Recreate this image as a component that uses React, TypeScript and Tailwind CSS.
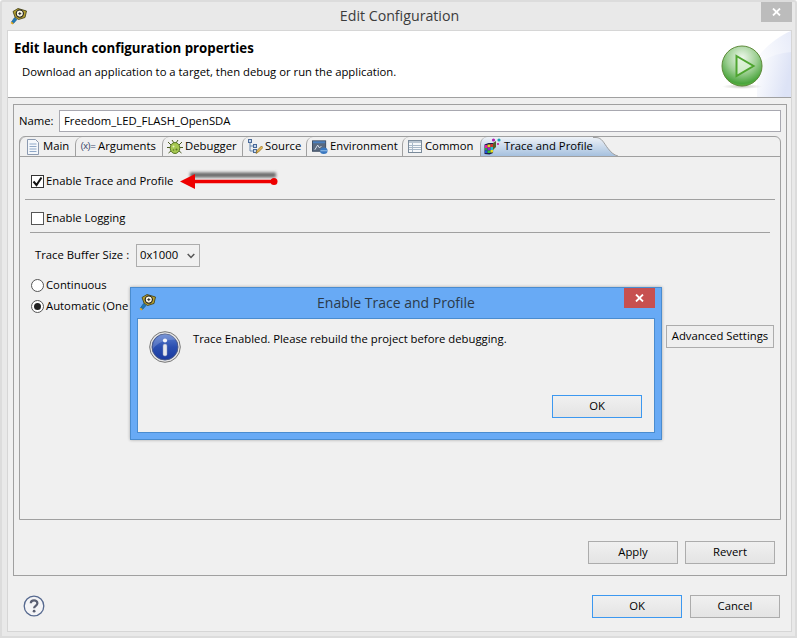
// App.tsx
import React from 'react';

const FlagIcon: React.FC = () => (
  <svg width="17" height="17" viewBox="0 0 17 17">
    <path d="M4.500 9.500L1.500 14l2 1.500 3.500-4z" fill="#1f78b4" stroke="#134a70" strokeWidth="0.5" />
    <path d="M.500 15l2 1.500 1.200-1.200-2-1.500z" fill="#e0a820" />
    <path d="M3 3.500L8 .500l8.500 2.500-1.500 6.500-6.500 2L5 9z" fill="#b5a030" stroke="#3c3a10" strokeWidth="0.8" />
    <circle cx="9.800" cy="5.600" r="3.600" fill="#fbf8e6" stroke="#1c1c1c" strokeWidth="1.100" />
    <path d="M8.300 5.600h3M9.800 4.100v3" stroke="#333" strokeWidth="1" />
  </svg>
);

const DocIcon: React.FC = () => (
  <svg width="14" height="16" viewBox="0 0 14 16">
    <path d="M1.500.500h8l3 3v12h-11z" fill="#f4f7fb" stroke="#8c9ab0" />
    <path d="M3.500 5h7M3.500 7.500h7M3.500 10h7M3.500 12.500h7" stroke="#8fa8c8" />
  </svg>
);

const BugIcon: React.FC = () => (
  <svg width="16" height="16" viewBox="0 0 16 16">
    <path d="M1 3l3 3M15 3l-3 3M0 8.500h3M16 8.500h-3M1.500 14l3-2.500M14.500 14l-3-2.500M5 1l2 3M11 1L9 4" stroke="#4a5a20" strokeWidth="1" />
    <ellipse cx="8" cy="9" rx="4.800" ry="5.500" fill="#a6c850" stroke="#5c7a28" />
    <circle cx="6.500" cy="7.500" r="1" fill="#e8f4c0" />
    <circle cx="9.500" cy="10.500" r="1" fill="#5c7a28" />
    <circle cx="6.500" cy="11" r="0.800" fill="#5c7a28" />
  </svg>
);

const SourceIcon: React.FC = () => (
  <svg width="16" height="16" viewBox="0 0 16 16">
    <path d="M3 2v10h4M3 7h4" stroke="#6a8ab0" fill="none" />
    <rect x="1.500" y="0.500" width="3" height="3" fill="#c8d8ec" stroke="#4a6a98" />
    <rect x="6.500" y="5.500" width="3" height="3" fill="#c8d8ec" stroke="#4a6a98" />
    <rect x="6.500" y="10.500" width="3" height="3" fill="#c8d8ec" stroke="#4a6a98" />
    <path d="M9 14.500l1-3 4.500-4.500 1.500 1.500-4.500 4.500z" fill="#e8b850" stroke="#8a6a20" strokeWidth="0.7" />
  </svg>
);

const EnvIcon: React.FC = () => (
  <svg width="17" height="16" viewBox="0 0 17 16">
    <rect x="0.500" y="1.500" width="14" height="11" fill="#5a6a80" stroke="#3a4a60" />
    <rect x="1" y="2" width="13" height="2" fill="#4a80c0" />
    <path d="M3 11l3-5 2 3 2-2" stroke="#dfe8f2" fill="none" />
    <ellipse cx="12.500" cy="12" rx="4" ry="3.500" fill="#3a78c0" />
    <path d="M9 12h7" stroke="#9cc4ec" />
  </svg>
);

const TableIcon: React.FC = () => (
  <svg width="14" height="13" viewBox="0 0 14 13">
    <rect x="0.500" y="0.500" width="13" height="12" fill="#f6f8fa" stroke="#7a8a9a" />
    <rect x="1" y="1" width="12" height="2" fill="#b8c4d0" />
    <path d="M1 5.500h12M1 7.500h12M1 9.500h12M4.500 3v9" stroke="#a8b8c8" />
  </svg>
);

const TraceIcon: React.FC = () => (
  <svg width="17" height="17" viewBox="0 0 17 17">
    <path d="M.500 6.500l4-1.500h5l-.500 10-3.500 1.500-5-.500z" fill="#1c1c50" />
    <rect x="1" y="7" width="2.500" height="3" fill="#e020a0" />
    <rect x="3.500" y="6.500" width="3" height="3" fill="#f0d020" />
    <rect x="6.500" y="6" width="2.500" height="3" fill="#d03030" />
    <rect x="1" y="10" width="2.500" height="2.500" fill="#20b040" />
    <rect x="3.500" y="9.500" width="3" height="3" fill="#a020d0" />
    <rect x="6.500" y="9" width="2.500" height="3" fill="#20c0d0" />
    <rect x="1" y="12.500" width="2.500" height="2.500" fill="#2050e0" />
    <rect x="3.500" y="12.500" width="3" height="2.500" fill="#30c030" />
    <rect x="6.500" y="12" width="2.500" height="2.500" fill="#e8e020" />
    <path d="M9 5l3-2v6l-3 3z" fill="#54602a" />
    <circle cx="9.500" cy="2" r="1.600" fill="#b020b0" />
    <circle cx="15" cy="2" r="1.600" fill="#20a0b0" />
    <circle cx="14" cy="6" r="1.100" fill="#c02090" />
  </svg>
);

const PlayBall: React.FC = () => (
  <svg width="44" height="48" viewBox="0 0 44 48">
    <defs>
      <radialGradient id="ballFill" cx="0.5" cy="0.3" r="0.75">
        <stop offset="0" stopColor="#f0f8ee" />
        <stop offset="0.5" stopColor="#9dcf93" />
        <stop offset="0.85" stopColor="#4aa53c" />
        <stop offset="1" stopColor="#6cc44c" />
      </radialGradient>
      <radialGradient id="ballShadow">
        <stop offset="0" stopColor="#b0b0a8" stopOpacity="0.7" />
        <stop offset="1" stopColor="#b0b0a8" stopOpacity="0" />
      </radialGradient>
    </defs>
    <ellipse cx="22" cy="41.500" rx="20" ry="2.500" fill="url(#ballShadow)" />
    <circle cx="22" cy="21" r="20" fill="url(#ballFill)" stroke="#5e8a3a" strokeWidth="1" />
    <path d="M16.500 11L33.500 21 16.500 31z" fill="#dff3d8" fillOpacity="0.75" stroke="#4fa530" strokeWidth="2" />
  </svg>
);

const InfoIcon: React.FC = () => (
  <svg width="32" height="32" viewBox="0 0 32 32">
    <defs>
      <linearGradient id="infoFill" x1="0" y1="0" x2="0" y2="1">
        <stop offset="0" stopColor="#5a7ed0" />
        <stop offset="0.5" stopColor="#2a4fb0" />
        <stop offset="1" stopColor="#1a3aa0" />
      </linearGradient>
    </defs>
    <circle cx="16" cy="16" r="15.300" fill="#e6e6e6" stroke="#777" />
    <circle cx="16" cy="16" r="13" fill="url(#infoFill)" stroke="#4a5a88" />
    <path d="M4 18c5-7 14-10 24-9-2-4-7-6-12-6C9 3 3 10 4 18z" fill="#fff" fillOpacity="0.18" />
    <circle cx="16" cy="9.500" r="2.100" fill="#f2f4fa" />
    <rect x="14" y="13" width="4" height="12" rx="1.800" fill="#e6e8ee" stroke="#8a96b8" strokeWidth="0.5" />
  </svg>
);

const HelpIcon: React.FC = () => (
  <svg width="22" height="22" viewBox="0 0 22 22">
    <circle cx="11" cy="11" r="9.800" fill="#f4f4f6" stroke="#56698f" strokeWidth="1.300" />
    <path d="M7.800 8.300c0-4 6.600-4 6.600 0 0 2.600-3.300 2.600-3.300 5" fill="none" stroke="#5a5f72" strokeWidth="2.200" />
    <circle cx="11.100" cy="16.200" r="1.400" fill="#5a5f72" />
  </svg>
);

const CloseGlyph: React.FC = () => (
  <svg width="9" height="8" viewBox="0 0 9 8">
    <path d="M1 .500l7 7M8 .500l-7 7" stroke="#fff" strokeWidth="1.800" />
  </svg>
);

const Btn: React.FC<{ label: string; focus?: boolean }> = ({ label, focus }) => (
  <button
    className={
      focus
        ? 'w-[90px] h-[23px] border border-[#3c98f0] bg-gradient-to-b from-[#f0f0f0] to-[#e4e4e4] text-black'
        : 'w-[90px] h-[23px] border border-[#acacac] bg-gradient-to-b from-[#f0f0f0] to-[#e4e4e4] text-black'
    }
  >
    {label}
  </button>
);

const Tab: React.FC<{ icon: React.ReactNode; label: string; cls: string }> = ({ icon, label, cls }) => (
  <div className={`${cls} flex items-center border-l border-[#a0a0a0] rounded-tl-[7px] whitespace-nowrap`}>
    <span className="w-[16px] mr-[2px] flex justify-center shrink-0">{icon}</span>
    <span>{label}</span>
  </div>
);

export default function App() {
  return (
    <div className="relative w-[800px] h-[640px] bg-white overflow-hidden font-['Open_Sans',sans-serif] text-[11.3px] text-black">
      {/* window frame */}
      <div className="w-[797px] h-[638px] flex flex-col bg-[#e9e9e9] border-2 border-[#dcdcdc] rounded-t-[3px] pr-[3px] pb-[4px] pl-[5px]">
        <div className="h-[28px] shrink-0 flex items-start">
          <div className="mt-[6px] ml-[3px]">
            <FlagIcon />
          </div>
          <div className="flex-1 text-center text-[14.2px] leading-[28px] text-[#3c3c3c] pl-[11px]">Edit Configuration</div>
          <div className="w-[31px] h-[20px] bg-[#bcbcbc] flex items-center justify-center">
            <CloseGlyph />
          </div>
        </div>

        <div className="flex-1 flex flex-col bg-[#f0f0f0] border border-[#d6d6d6]">
          {/* banner */}
          <div className="relative h-[67px] shrink-0 bg-white border-b border-[#a0a0a0] pl-[6px]">
            <svg className="absolute right-0 top-0" width="36" height="66" viewBox="0 0 36 66">
              <defs>
                <linearGradient id="deco" x1="0" y1="0" x2="1" y2="0.3">
                  <stop offset="0" stopColor="#ffffff" />
                  <stop offset="1" stopColor="#dde3f6" />
                </linearGradient>
                <linearGradient id="decoTop" x1="0" y1="0.6" x2="1" y2="0">
                  <stop offset="0" stopColor="#ffffff" />
                  <stop offset="1" stopColor="#e8ecf9" />
                </linearGradient>
              </defs>
              <path d="M0 30C10 15 24 5 36 0v66H0z" fill="url(#decoTop)" />
              <path d="M2 33c10-7 22-11 34-12v45H2z" fill="url(#deco)" />
            </svg>
            <div className="text-[13.25px] font-bold leading-[20px] mt-[7px]">Edit launch configuration properties</div>
            <div className="leading-[16px] mt-[6px] ml-[8px]">Download an application to a target, then debug or run the application.</div>
            <div className="absolute right-[27px] top-[14px]">
              <PlayBall />
            </div>
          </div>

          {/* main section */}
          <div className="mt-[6px] ml-[5px] mr-[4px] h-[472px] shrink-0 flex flex-col border border-[#a0a0a0] px-[5px] pt-[5px]">
            <div className="flex items-center h-[22px] shrink-0">
              <span className="w-[40px]">Name:</span>
              <input
                readOnly
                value="Freedom_LED_FLASH_OpenSDA"
                className="flex-1 h-[22px] bg-white border border-[#a8a8b0] px-[4px] pb-[2px] outline-none"
              />
            </div>

            <div className="mt-[4px] h-[384px] shrink-0 flex flex-col border border-[#a0a0a0] rounded-t-[6px]">
              <div className="flex h-[20px] shrink-0 -ml-px border-b border-[#a0a0a0]">
                <Tab cls="w-[56px] pl-[5px]" icon={<DocIcon />} label="Main" />
                <Tab
                  cls="w-[87px] pl-[4px]"
                  icon={<span className="text-[#3c4a6a] text-[9.5px] tracking-[-0.4px] font-['Liberation_Sans',sans-serif]">(x)=</span>}
                  label="Arguments"
                />
                <Tab cls="w-[80px] pl-[4px]" icon={<BugIcon />} label="Debugger" />
                <Tab cls="w-[64px] pl-[4px]" icon={<SourceIcon />} label="Source" />
                <Tab cls="w-[96px] pl-[5px]" icon={<EnvIcon />} label="Environment" />
                <Tab cls="w-[78px] pl-[4px]" icon={<TableIcon />} label="Common" />
                <div className="w-[113px] flex items-center gap-[3px] pl-[3px] border-l border-[#a0a0a0] rounded-tl-[7px] bg-gradient-to-b from-[#eef2f7] to-[#a6c1df] whitespace-nowrap">
                  <TraceIcon />
                  <span>Trace and Profile</span>
                </div>
                <svg width="25" height="19" viewBox="0 0 25 19" className="shrink-0">
                  <defs>
                    <linearGradient id="tabFill" x1="0" y1="0" x2="0" y2="1">
                      <stop offset="0" stopColor="#eef2f7" />
                      <stop offset="1" stopColor="#a6c1df" />
                    </linearGradient>
                  </defs>
                  <path d="M0 0h3c6 0 8 6 12 11 3 4 6 7 10 8H0z" fill="url(#tabFill)" />
                  <path d="M0 .500h3c6 0 8 6 12 11 3 4 6 6.500 10 7.500" fill="none" stroke="#a0a0a0" />
                </svg>
              </div>

              <div className="flex-1 flex flex-col px-[5px]">
                <label className="flex items-center h-[20px] mt-[14px] ml-[6px] gap-[2px]">
                  <span className="w-[13px] h-[13px] border border-[#333] bg-white flex items-center justify-center">
                    <svg width="11" height="11" viewBox="0 0 11 11">
                      <path d="M1.500 5.500l3 3.500 5-7.500" fill="none" stroke="#111" strokeWidth="2" />
                    </svg>
                  </span>
                  <span>Enable Trace and Profile</span>
                </label>
                <div className="h-px bg-[#a0a0a0] mt-[8px]" />
                <label className="flex items-center h-[20px] mt-[8px] ml-[6px] gap-[2px]">
                  <span className="w-[13px] h-[13px] border border-[#555] bg-white" />
                  <span>Enable Logging</span>
                </label>
                <div className="h-px bg-[#a0a0a0] mt-[4px] ml-[5px] mr-[5px]" />
                <div className="flex items-center h-[23px] mt-[11px] ml-[10px]">
                  <span className="w-[101px]">Trace Buffer Size :</span>
                  <div className="w-[64px] h-[23px] border border-[#acacac] flex items-center justify-between pl-[3px] pr-[4px]">
                    <span>0x1000</span>
                    <svg width="8" height="6" viewBox="0 0 8 6">
                      <path d="M.700 1l3.300 3.500L7.300 1" fill="none" stroke="#555" strokeWidth="1.500" />
                    </svg>
                  </div>
                </div>
                <label className="flex items-center h-[20px] mt-[8px] ml-[6px] gap-[2px]">
                  <span className="w-[13px] h-[13px] rounded-full border border-[#555] bg-white" />
                  <span>Continuous</span>
                </label>
                <label className="flex items-center h-[20px] mt-[1px] ml-[6px] gap-[2px]">
                  <span className="w-[13px] h-[13px] rounded-full border border-[#555] bg-white flex items-center justify-center">
                    <span className="w-[7px] h-[7px] rounded-full bg-[#222]" />
                  </span>
                  <span>Automatic (One shot)</span>
                </label>
                <div className="flex justify-end mt-[9px] mr-[1px]">
                  <button className="w-[108px] h-[23px] border border-[#acacac] bg-[#efefef] whitespace-nowrap">Advanced Settings</button>
                </div>
              </div>
            </div>

            <div className="flex justify-end gap-[7px] mt-[21px] mr-[6px]">
              <Btn label="Apply" />
              <Btn label="Revert" />
            </div>
          </div>

          {/* bottom buttons */}
          <div className="flex items-center mt-[19px] pl-[15px] pr-[11px]">
            <div className="self-start">
              <HelpIcon />
            </div>
            <div className="flex-1" />
            <div className="flex gap-[8px]">
              <Btn label="OK" focus />
              <Btn label="Cancel" />
            </div>
          </div>
        </div>
      </div>

      {/* annotation arrow */}
      <svg className="absolute left-[176px] top-[165px]" width="110" height="28" viewBox="0 0 110 28">
        <defs>
          <filter id="soft" filterUnits="userSpaceOnUse" x="0" y="0" width="110" height="28">
            <feGaussianBlur stdDeviation="1.800" />
          </filter>
        </defs>
        <path d="M14 10h86" stroke="#666" strokeWidth="5" filter="url(#soft)" />
        <path d="M16 16.500h82" stroke="#ee0000" strokeWidth="3.500" />
        <path d="M4 16.500l15-7.500v15z" fill="#ee0000" />
        <circle cx="98" cy="16.500" r="3.500" fill="#ee0000" />
      </svg>

      {/* message dialog */}
      <div className="absolute left-[130px] top-[287px] w-[532px] h-[153px] flex flex-col bg-[#68aaf5] border border-[#4a8ccf] shadow-[0_0_3px_rgba(0,0,0,0.3)] px-[6px] pb-[6px]">
        <div className="relative h-[30px] shrink-0 flex items-start">
          <div className="mt-[6px] ml-[2px]">
            <FlagIcon />
          </div>
          <div className="absolute left-0 right-0 top-0 text-center text-[14px] leading-[29px] text-[#2b3a4a]">Enable Trace and Profile</div>
          <div className="absolute right-0 top-0 w-[31px] h-[20px] bg-[#c75050] flex items-center justify-center">
            <CloseGlyph />
          </div>
        </div>
        <div className="flex-1 flex flex-col bg-[#f0f0f0] border border-[#4a8ccf] pl-[11px] pr-[12px]">
          <div className="flex items-start mt-[12px] h-[64px]">
            <InfoIcon />
            <span className="ml-[12px]">Trace Enabled. Please rebuild the project before debugging.</span>
          </div>
          <div className="flex justify-end">
            <Btn label="OK" focus />
          </div>
        </div>
      </div>
    </div>
  );
}
